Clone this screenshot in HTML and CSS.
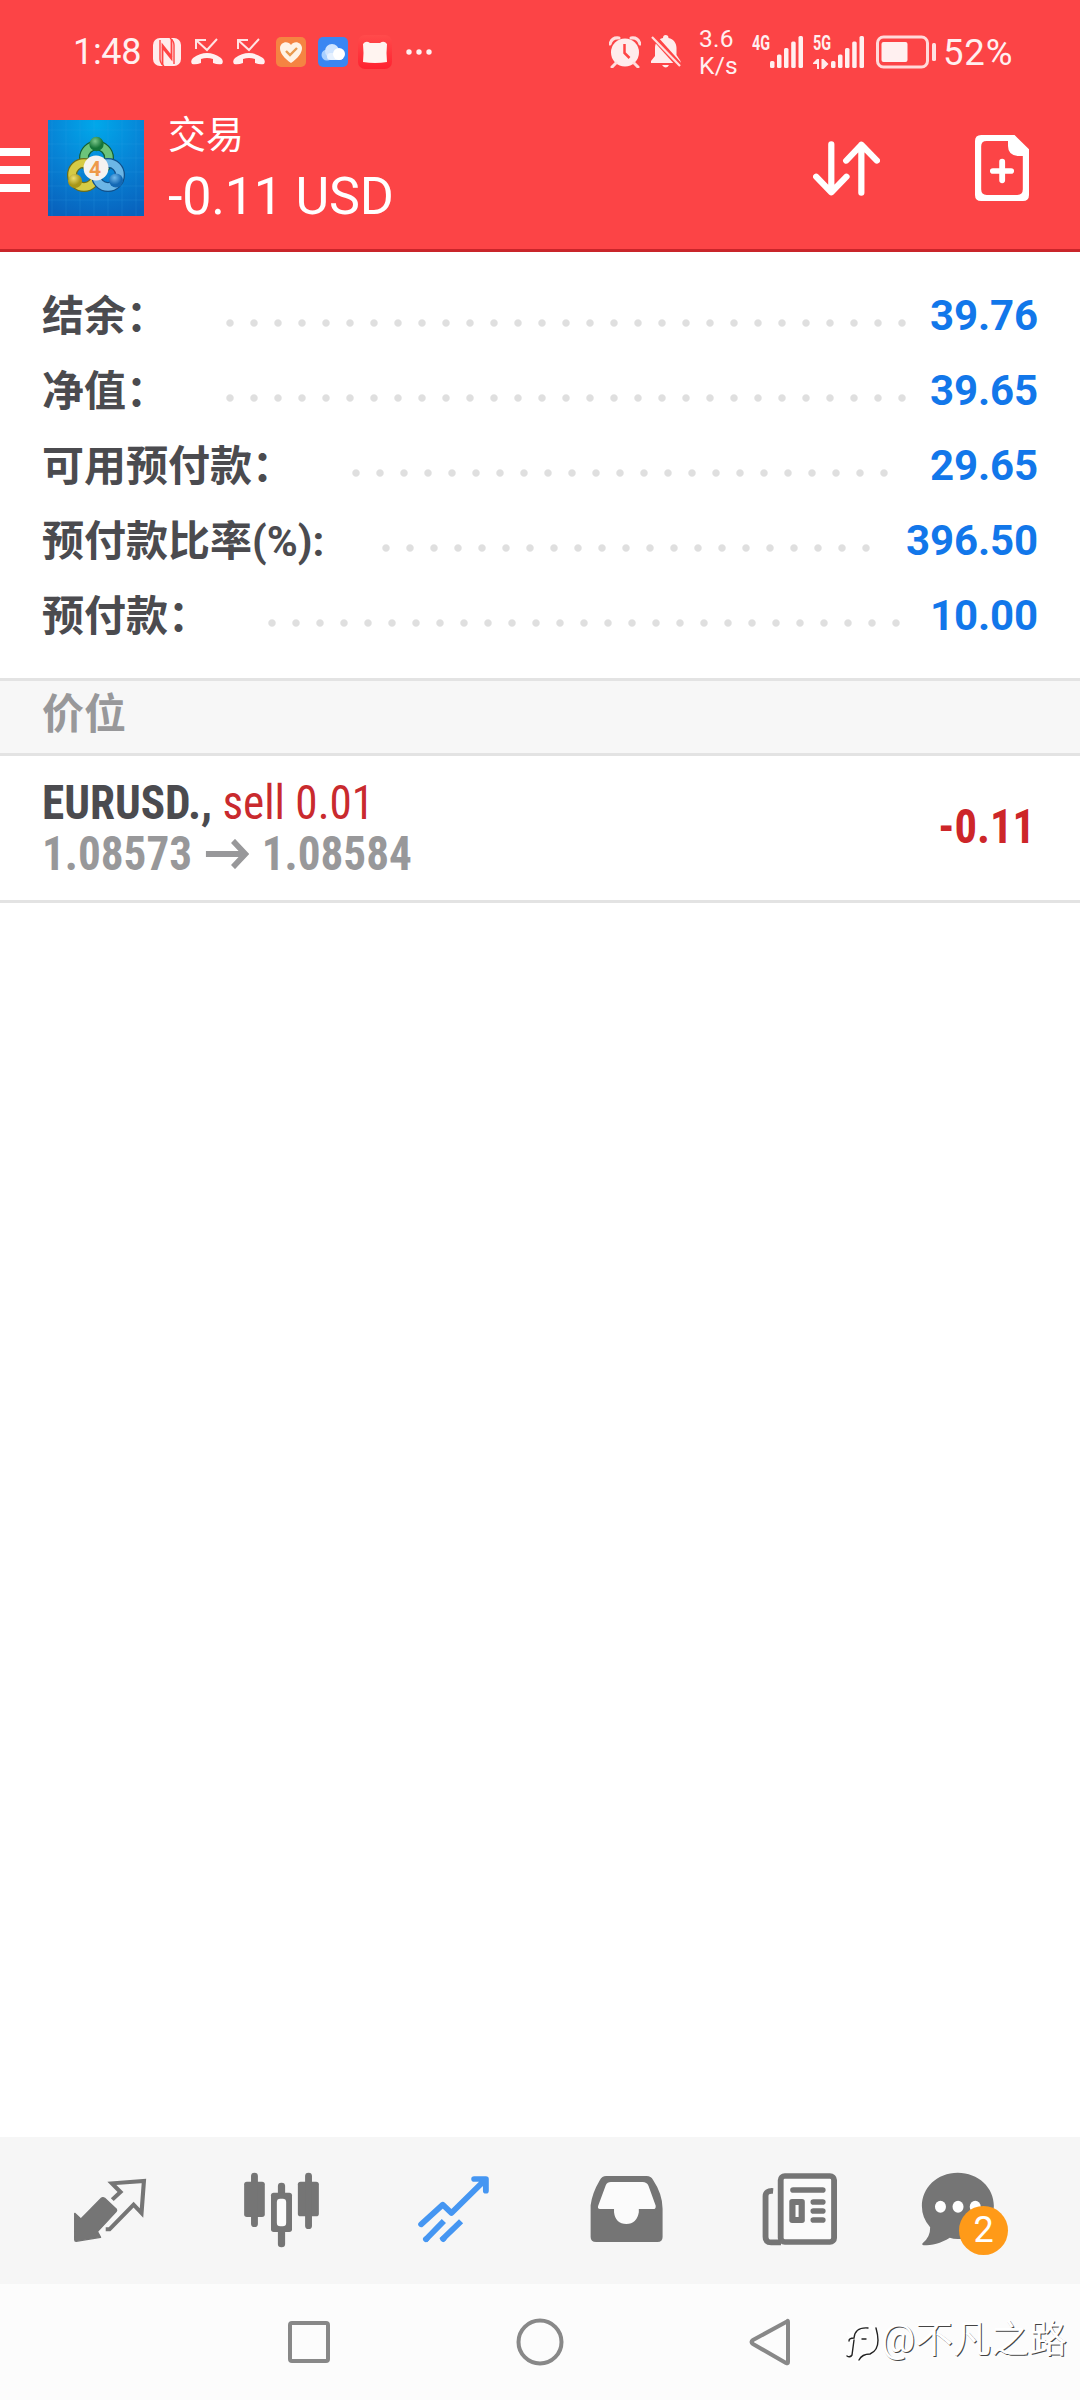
FILE: index.html
```html
<!DOCTYPE html>
<html lang="zh-CN">
<head>
<meta charset="utf-8">
<title>交易</title>
<link rel="stylesheet" href="styles.css">
</head>
<body>
<div class="screen">
  <header class="header">
    <div class="status">
      <span class="clock">1:48</span>
      <svg class="nfc" width="30" height="30" viewBox="0 0 30 30"><rect x="1" y="1" width="28" height="28" rx="7" fill="#ffecec"/><path d="M10.500 28V8l9.500 12M19.500 2v20L10 10" fill="none" stroke="#f44" stroke-width="1.800"/><path d="M8 3v19q0 4 4 7M22 27V8q0-4-4-7" fill="none" stroke="#f44" stroke-width="1.400"/></svg>
      <svg class="call" width="32" height="28" viewBox="0 0 32 28"><path d="M5 11V2h10M5 2l11 10L26 1" fill="none" stroke="#ffe4e4" stroke-width="2"/><path d="M1 26q-2-3 1-6 14-10 28 0 3 3 1 6-4 1-9-1v-4q-6-2-12 0v4q-5 2-9 1z" fill="#fff0f0"/></svg>
      <svg class="call" width="32" height="28" viewBox="0 0 32 28"><path d="M5 11V2h10M5 2l11 10L26 1" fill="none" stroke="#ffe4e4" stroke-width="2"/><path d="M1 26q-2-3 1-6 14-10 28 0 3 3 1 6-4 1-9-1v-4q-6-2-12 0v4q-5 2-9 1z" fill="#fff0f0"/></svg>
      <svg class="app" width="30" height="30" viewBox="0 0 30 30"><rect width="30" height="30" rx="5" fill="#f58442"/><path d="M15 26C8 21 4 16 4 11c0-6 8-8 11-3 3-5 11-3 11 3 0 5-4 10-11 15z" fill="#fff3e6"/><path d="M10 14l4 4 7-7" fill="none" stroke="#e89a50" stroke-width="2.4"/></svg>
      <svg class="cloud" width="30" height="30" viewBox="0 0 30 30"><rect width="30" height="30" rx="5" fill="#3a86f2"/><circle cx="9" cy="18" r="5.500" fill="#a9d0ff"/><circle cx="14" cy="14" r="7" fill="#cfe4ff"/><rect x="9" y="16" width="16" height="7" rx="3.500" fill="#e6f1ff"/><circle cx="21" cy="17" r="6" fill="#fff"/></svg>
      <svg class="cat" width="34" height="34" viewBox="0 0 34 34"><defs><linearGradient id="cat" x2="0" y2="1"><stop offset="0" stop-color="#ff4b4b"/><stop offset="1" stop-color="#ff2230"/></linearGradient></defs><rect width="34" height="34" rx="7" fill="url(#cat)"/><path d="M5 9q3-4 7-1h10q4-3 7 1-1 9 0 18-12 2-24 0 1-9 0-18z" fill="#fff4f0"/></svg>
      <svg class="more" width="26" height="6" viewBox="0 0 26 6" fill="#fff0f0"><circle cx="3" cy="3" r="2.700"/><circle cx="13" cy="3" r="2.700"/><circle cx="23" cy="3" r="2.700"/></svg>
      <svg class="alarm" width="32" height="32" viewBox="0 0 32 32"><circle cx="16" cy="16.500" r="14" fill="#ffecec"/><path d="M1 8Q3 1 10 2M31 8Q29 1 22 2M7 27l-4 4M25 27l4 4" fill="none" stroke="#ffdede" stroke-width="3" stroke-linecap="round"/><path d="M15.500 8v9l5 5" fill="none" stroke="#f44" stroke-width="2.500"/></svg>
      <svg class="bell" width="30" height="34" viewBox="0 0 30 34"><path d="M14.500 0c2 0 3 1 3 3 5 1 8 5 8 10v7l4 6v2H0v-2l4-5v-8c0-5 3-9 8-10 0-2 1-3 2.500-3zM11 30h7q-3 5-7 0z" fill="#ffecec"/><path d="M2 1l27 30" stroke="#f44" stroke-width="6"/><path d="M1 2l28 29" stroke="#ffdede" stroke-width="2.200"/></svg>
      <span class="speed">3.6<br>K/s</span>
      <span class="net"><span class="gen">4G</span></span>
      <svg class="bars" width="34" height="34" viewBox="0 0 34 34" fill="#fff0f0"><rect y="26" width="4.500" height="7" rx="1.500"/><rect x="7" y="19.500" width="4.500" height="13.500" rx="1.500"/><rect x="14" y="13" width="4.500" height="20" rx="1.500"/><rect x="21.200" y="6.500" width="4.500" height="26.500" rx="1.500"/><rect x="28.500" y="1" width="4.500" height="32" rx="1.500"/></svg>
      <span class="net net5"><span class="gen">5G</span><svg width="17" height="10" viewBox="0 0 17 10" fill="#ffecec"><path d="M0 4L4 0h2v10H4V5H0zM8.500 0h2l5 5-5 5h-2z"/></svg></span>
      <svg class="bars" width="34" height="34" viewBox="0 0 34 34" fill="#fff0f0"><rect y="26" width="4.500" height="7" rx="1.500"/><rect x="7" y="19.500" width="4.500" height="13.500" rx="1.500"/><rect x="14" y="13" width="4.500" height="20" rx="1.500"/><rect x="21.200" y="6.500" width="4.500" height="26.500" rx="1.500"/><rect x="28.500" y="1" width="4.500" height="32" rx="1.500"/></svg>
      <svg class="battery" width="60" height="34" viewBox="0 0 60 34"><rect x="1.500" y="2" width="50" height="30" rx="6" fill="none" stroke="#ffdada" stroke-width="3"/><rect x="5.500" y="7" width="26" height="20" rx="2" fill="#fff0f0"/><rect x="56" y="8" width="4" height="18" rx="1.500" fill="#ffe2e2"/></svg>
      <span class="percent">52%</span>
    </div>
    <div class="titlebar">
      <div class="menu"><i></i><i></i><i></i></div>
      <svg class="logo" width="96" height="96" viewBox="0 0 96 96">
        <defs>
          <radialGradient id="sky" cx=".5" cy=".05" r="1"><stop offset="0" stop-color="#00a8ea"/><stop offset=".5" stop-color="#0784d6"/><stop offset="1" stop-color="#0862bd"/></radialGradient>
          <radialGradient id="g" cx=".4" cy=".3"><stop offset="0" stop-color="#7cc88b"/><stop offset="1" stop-color="#157538"/></radialGradient>
          <radialGradient id="y" cx=".4" cy=".3"><stop offset="0" stop-color="#eee070"/><stop offset="1" stop-color="#a89618"/></radialGradient>
          <radialGradient id="b" cx=".4" cy=".3"><stop offset="0" stop-color="#72b9ec"/><stop offset="1" stop-color="#1468b4"/></radialGradient>
        </defs>
        <rect width="96" height="96" fill="url(#sky)"/>
        <path d="M4 0v96M18 0v96M32 0v96M46 0v96M60 0v96M74 0v96M88 0v96M0 10h96M0 24h96M0 38h96M0 52h96M0 66h96M0 80h96" stroke="#3aa6e8" stroke-opacity=".18"/>
        <g fill="none">
          <circle cx="48.500" cy="38" r="12.500" stroke="#155f35" stroke-width="10"/><circle cx="48.500" cy="38" r="12.500" stroke="#6cc47a" stroke-width="7.500"/>
          <circle cx="36" cy="55" r="12" stroke="#6d6d18" stroke-width="10"/><circle cx="36" cy="55" r="12" stroke="#d6cb45" stroke-width="7.500"/>
          <circle cx="60" cy="55" r="12" stroke="#11508a" stroke-width="10"/><circle cx="60" cy="55" r="12" stroke="#6cb6e6" stroke-width="7.500"/>
        </g>
        <circle cx="48.500" cy="24" r="7.200" fill="url(#g)"/><circle cx="27" cy="61" r="7" fill="url(#y)"/><circle cx="68" cy="60.500" r="7" fill="url(#b)"/>
        <circle cx="48" cy="48" r="12.500" fill="#f5f3f0"/>
        <text class="four" x="47" y="56" text-anchor="middle">4</text>
      </svg>
      <div class="heading"><div class="title">交易</div><div class="total">-0.11 USD</div></div>
      <svg class="sort" width="67" height="56" viewBox="792 421 194 168" preserveAspectRatio="none" fill="none" stroke="#fff" stroke-width="18" stroke-linecap="round" stroke-linejoin="round"><path d="M845 431V575M801 528l44 47 44-47M932 576V432M888 480l44-48 45 48"/></svg>
      <svg class="add" width="54" height="66" viewBox="1263 405 157 198" preserveAspectRatio="none"><path fill="#fff" fill-rule="evenodd" d="M1281 405H1378L1420 448V585q0 18-18 18H1281q-18 0-18-18V423q0-18 18-18zM1297 423q-16 0-16 16V568q0 17 16 17H1386q16 0 16-17V468H1387q-28-3-28-30V423z"/><path d="M1342 485V541M1315 513H1368" stroke="#fff" stroke-width="17" stroke-linecap="round"/></svg>
    </div>
  </header>

  <section class="account">
    <div class="row"><span class="label">结余：</span><span class="dots" style="--n:29"></span><span class="value">39.76</span></div>
    <div class="row"><span class="label">净值：</span><span class="dots" style="--n:29"></span><span class="value">39.65</span></div>
    <div class="row"><span class="label">可用预付款：</span><span class="dots" style="--n:23"></span><span class="value">29.65</span></div>
    <div class="row"><span class="label">预付款比率(%):</span><span class="dots" style="--n:21"></span><span class="value">396.50</span></div>
    <div class="row"><span class="label">预付款：</span><span class="dots" style="--n:27"></span><span class="value">10.00</span></div>
  </section>

  <div class="section-title">价位</div>
  <div class="position">
    <div class="details">
      <div class="symbol"><b>EURUSD.,</b> <span class="sell">sell 0.01</span></div>
      <div class="prices"><span>1.08573</span><svg width="46" height="30" viewBox="0 0 46 30"><path d="M0 15h42M29 2l13 13-13 13" fill="none" stroke="#98989a" stroke-width="6"/></svg><span>1.08584</span></div>
    </div>
    <div class="profit">-0.11</div>
  </div>

  <main class="empty"></main>

  <nav class="tabs">
    <svg class="tab" viewBox="69.700 51 499.500 438" preserveAspectRatio="none"><path fill="#757575" stroke="#757575" stroke-width="4" stroke-linejoin="round" d="M217 280L235 297 295 234Q299 231 304 235L338 268Q340 271 337 275L283 335 292 352 221 364Q217 364 217 359z"/><path fill="none" stroke="#757575" stroke-width="12" d="M326 239L350 216 325 190 418 183 411 279 388 254 318 328H307"/></svg>
    <svg class="tab" viewBox="569.200 51 499.500 438" preserveAspectRatio="none" fill="#757575"><rect x="709" y="185" width="60" height="106" rx="8"/><rect x="729" y="158" width="20" height="163" rx="10"/><rect x="865" y="185" width="61" height="104" rx="8"/><rect x="886" y="158" width="20" height="169" rx="10"/><rect x="807" y="188" width="21" height="50" rx="10"/><rect x="807" y="318" width="21" height="64" rx="10"/><rect x="787" y="218" width="61" height="118" rx="8"/><rect x="804" y="236" width="27" height="83" rx="10" fill="#fbfbfb"/></svg>
    <svg class="tab" viewBox="1068.700 51 499.500 438" preserveAspectRatio="none" fill="none" stroke="#4596f2" stroke-width="17" stroke-linejoin="round"><path stroke-linecap="round" d="M1223 313L1286 254 1311 279 1409 179M1377 177H1411V212"/><path d="M1289 303L1234 361M1339 304L1282 361"/><path stroke-linecap="round" d="M1237 358l1-1M1287 357l1-1"/></svg>
    <svg class="tab" viewBox="0 51 499.500 438" preserveAspectRatio="none"><path fill="#757575" d="M192 168H310Q322 168 328 179 356 222 356 266V351Q356 366 341 366H163Q147 366 147 351V256Q151 220 174 180 180 168 192 168z"/><path fill="#fbfbfb" d="M206 186H298Q310 186 315 197L336 257Q337 267 329 267H287V277Q281 312 251 312 219 312 215 277V267H174Q166 266 169 257L191 196Q195 186 206 186z"/></svg>
    <svg class="tab" viewBox="499.500 51 499.500 438" preserveAspectRatio="none"><g fill="none" stroke="#757575" stroke-width="17"><path d="M677 213Q655 211 655 229V350Q655 367 671 367H700"/><rect x="699" y="168" width="155" height="198" rx="12" fill="#fbfbfb"/><path d="M735 210H821M794 246H821M794 273H821M794 300H821" stroke-linecap="round"/></g><rect x="724" y="237" width="45" height="72" rx="8" fill="#757575"/><rect x="742" y="255" width="9" height="36" fill="#fbfbfb"/></svg>
    <div class="chat"><svg class="tab" viewBox="999 51 499.500 438" preserveAspectRatio="none"><path fill="#757575" d="M1213 158C1273 158 1318 203 1318 257S1270 357 1213 357Q1200 357 1190 353C1164 370 1138 376 1114 376Q1108 375 1111 370 1134 351 1133 322 1109 294 1109 258C1109 203 1153 158 1213 158z"/><g fill="#fff"><ellipse cx="1163" cy="260" rx="16" ry="18"/><ellipse cx="1214" cy="260" rx="16" ry="18"/><ellipse cx="1264" cy="260" rx="16" ry="18"/></g></svg><span class="badge">2</span></div>
  </nav>
  <footer class="system">
    <svg width="42" height="42" viewBox="0 0 42 42"><rect x="2" y="2" width="38" height="38" rx="2" fill="none" stroke="#888" stroke-width="4"/></svg>
    <svg width="48" height="48" viewBox="0 0 48 48"><circle cx="24" cy="24" r="21.500" fill="none" stroke="#888" stroke-width="4"/></svg>
    <svg width="42" height="48" viewBox="0 0 42 48"><path d="M38 3.500Q39 2 39 4V44Q39 46 37 45L4 26Q1 24 4 22z" fill="none" stroke="#888" stroke-width="4" stroke-linejoin="round"/></svg>
    <div class="watermark"><svg width="36" height="46" viewBox="0 0 36 46" fill="none" stroke-linecap="round"><path d="M5 33Q8 30 9 15H4M10 14Q12 6 24 7 33 10 32 22 31 34 21 35 16 36 13 42M18 17h4" stroke="#fff" stroke-width="4"/><path d="M2 37q3 2 5-1l2-15M4 22q0-3 5-3 1-11 14-10M31 9q6 21-6 26-8 0-11 6M17 20h4" stroke="#222" stroke-width="1.400"/></svg><span>@不凡之路</span></div>
  </footer>
</div>
</body>
</html>
```
FILE: styles.css
```css
* { box-sizing: border-box; }
body { margin: 0; background: #fff; font-family: Roboto, "Noto Sans CJK SC", sans-serif; }
svg { display: block; flex: none; }
.screen { width: 1080px; height: 2400px; display: flex; flex-direction: column; overflow: hidden; }

.header { height: 252px; flex: none; background: #fc4446; border-bottom: 3px solid #c9252a; color: #fff; }
.status { height: 104px; display: flex; align-items: center; padding-left: 73px; color: #fff0f0; }
.clock { width: 79px; font-size: 36px; letter-spacing: -.3px; }
.nfc { margin-right: 9px; }
.call { margin-right: 10px; }
.app { margin: 0 12px 0 1px; }
.cloud { margin-right: 10px; }
.more { margin: 0 177px 0 14px; }
.alarm { margin-right: 10px; }
.bell { margin-right: 17px; }
.speed { width: 54px; font-size: 24.500px; line-height: 27px; letter-spacing: .3px; text-align: left; padding-left: 1px; }
.net { width: 18px; height: 34px; display: flex; flex-direction: column; justify-content: space-between; }
.gen { width: 26px; font-size: 20px; line-height: 16px; font-weight: 700; transform: scaleX(.72); transform-origin: left; }
.net5 { margin-left: 9px; }
.battery { margin-left: 11px; }
.percent { margin-left: 7px; font-size: 36.500px; letter-spacing: .8px; }

.titlebar { height: 145px; display: flex; align-items: flex-start; }
.menu { width: 30px; padding-top: 44px; display: flex; flex-direction: column; gap: 10px; }
.menu i { height: 8px; background: #fff; }
.logo { margin: 16px 24px 0 18px; }
.four { font: 700 21px Roboto, sans-serif; fill: #ee9a4a; }
.heading { width: 645px; }
.title { font-size: 38px; line-height: 44px; margin-top: 9px; }
.total { font-size: 52px; letter-spacing: -.2px; line-height: 60px; margin-top: 10px; }
.sort { margin-top: 37px; }
.add { margin: 31px 0 0 95px; }

.account { height: 426px; flex: none; padding: 25px 42px 0; }
.row { height: 75px; display: flex; align-items: center; font-size: 42px; font-weight: 700; }
.label { color: #4b4b4f; white-space: nowrap; padding-bottom: 5px; }
.dots { width: calc(var(--n) * 24px); height: 8px; margin: 16px 0 0 50px; background: radial-gradient(circle at center, #dfdfdf 3.200px, transparent 4.200px) 0 0 / 24px 8px; }
.value { margin-left: auto; padding-top: 2px; letter-spacing: -.1px; color: #1277ea; }

.section-title { height: 78px; flex: none; padding: 2px 0 0 42px; border: solid #e3e3e3; border-width: 3px 0; background: #f7f7f7; color: #98989a; font-size: 42px; font-weight: 700; line-height: 64px; }
.position { height: 147px; flex: none; border-bottom: 3px solid #e3e3e3; padding: 21px 45px 0 42px; display: flex; justify-content: space-between; font-size: 48px; font-family: "Roboto Condensed", Roboto, sans-serif; font-stretch: 75%; }
.details { transform: scaleX(.941); transform-origin: left; }
.symbol, .prices { line-height: 51px; color: #4b4b4f; white-space: nowrap; }
.sell { color: #c92a2e; }
.prices { display: flex; align-items: center; gap: 14px; color: #98989a; font-weight: 700; }
.profit { color: #cd2629; font-weight: 700; line-height: 100px; transform: scaleX(.93); transform-origin: right; }
.empty { flex: 1; background: #fff; }

.tabs { height: 147px; flex: none; background: #f6f6f6; padding: 0 24px; display: flex; }
.tab { width: 172px; height: 146px; }
.chat { position: relative; }
.badge { position: absolute; left: 75px; top: 69px; width: 49px; height: 49px; border-radius: 50%; background: #ff9a18; color: #fff; font-size: 36px; line-height: 49px; text-align: center; }
.system { height: 116px; flex: none; background: #fcfcfc; display: flex; align-items: center; padding-left: 288px; }
.system > svg { margin-right: 186px; }
.system > svg + svg { margin-right: 185px; }
.system > svg + svg + svg { margin-right: 54px; }
.watermark { display: flex; align-items: center; color: #fff; font-size: 38px; text-shadow: 1px 1px 0 #444; white-space: nowrap; }
.watermark span { padding-bottom: 13px; }
```
